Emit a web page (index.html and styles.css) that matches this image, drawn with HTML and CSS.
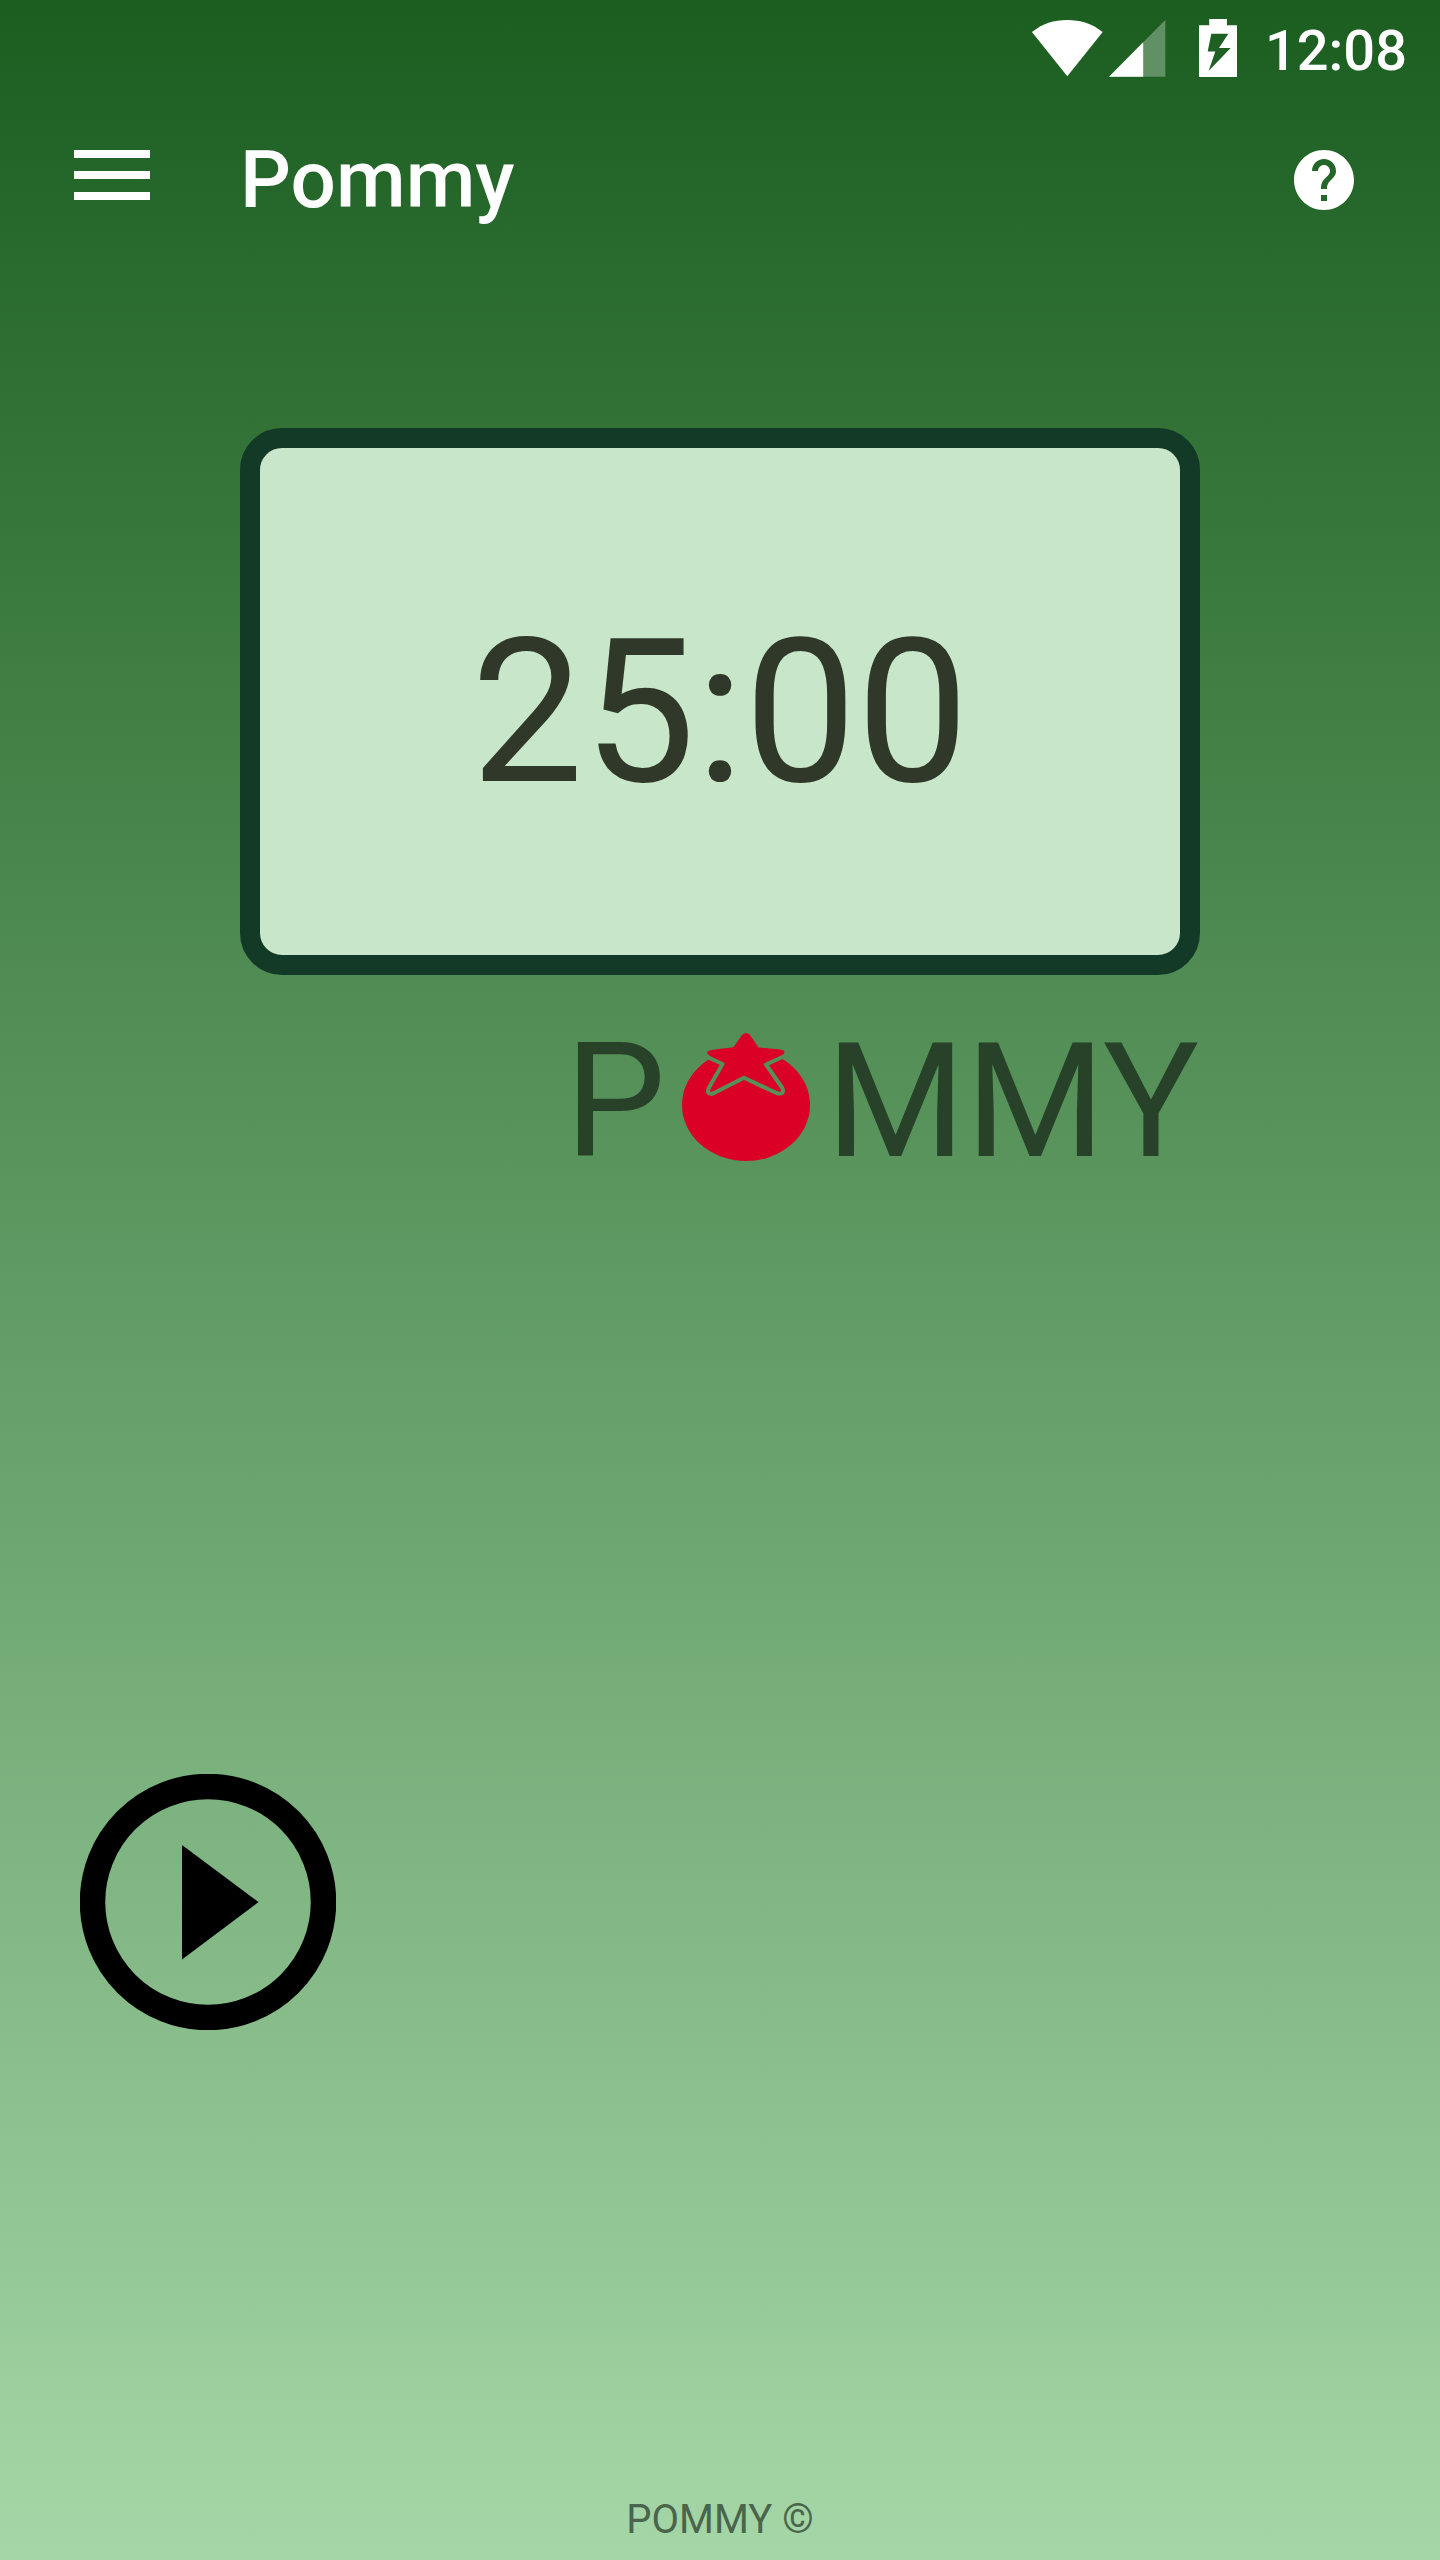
FILE: index.html
```html
<!DOCTYPE html>
<html lang="en">
<head>
<meta charset="utf-8">
<title>Pommy</title>
<link rel="stylesheet" href="styles.css">
</head>
<body>
<div class="screen">
  <div class="status-bar">
    <svg class="wifi" width="72" height="58" viewBox="0 0 72 58"><path d="M.9 13C11.500 4.500 23 .9 36.200.9S61 4.500 71.700 13L36.300 57.300Z" fill="#fff"/></svg>
    <svg class="signal" width="57" height="57" viewBox="0 0 57 57"><path d="M56.300 0v56.800H0Z" fill="#fff" fill-opacity=".3"/><path d="M34.200 22.300v34.500H0Z" fill="#fff"/></svg>
    <svg class="battery" width="38" height="58" viewBox="0 0 38 58"><path fill="#fff" fill-rule="evenodd" d="M10.200 0h17.800v6.200h10v51.800H0V6.200h10.200ZM12.300 14.700 8.700 32.500h7.600L9.600 52 31.700 29H20L29.300 14.700Z"/></svg>
    <span class="clock">12:08</span>
  </div>
  <header class="app-bar">
    <button class="menu" aria-label="Menu"><span></span><span></span><span></span></button>
    <h1>Pommy</h1>
    <svg class="help" width="72" height="72" viewBox="0 0 24 24"><path fill="#fff" d="M12 2C6.480 2 2 6.480 2 12s4.480 10 10 10 10-4.480 10-10S17.520 2 12 2zm1 17h-2v-2h2v2zm2.070-7.750-.9.920C13.450 12.900 13 13.500 13 15h-2v-.5c0-1.100.45-2.100 1.170-2.830l1.240-1.260c.37-.36.590-.86.590-1.410 0-1.100-.9-2-2-2s-2 .9-2 2H8c0-2.210 1.790-4 4-4s4 1.790 4 4c0 .88-.36 1.680-.93 2.250z"/></svg>
  </header>
  <main>
    <div class="timer">25:00</div>
    <div class="brand">
      <span>P</span>
      <svg width="128" height="128" viewBox="0 0 128 128">
        <mask id="leaf-gap" maskUnits="userSpaceOnUse" x="0" y="0" width="128" height="128">
          <rect width="128" height="128" fill="#fff"/>
          <path d="M22 22.500 40.500 31 26.800 55Q24 62 31 60.500L62 44.800 95 60.300Q103 62 100.300 55L84 31.500 106 21.500" fill="none" stroke="#000" stroke-width="4" stroke-linejoin="round"/>
        </mask>
        <g fill="#da0026" mask="url(#leaf-gap)">
          <ellipse cx="64" cy="72" rx="64" ry="56"/>
          <path d="M25.500 18.500Q27 17 37 16L51.500 14.200 60 2Q64 -2 68 2L76.500 14.500 93 16Q101 16.500 102.500 18.500Q103 20.500 99 23L84 31 70 40H56L40 31 28 23Q24.500 20.500 25.500 18.500Z"/>
        </g>
      </svg>
      <span>MMY</span>
    </div>
    <button class="play" aria-label="Start"><svg width="256" height="256" viewBox="0 0 256 256"><circle cx="128" cy="128" r="115.500" fill="none" stroke="#000" stroke-width="25.500"/><path d="M102 71v114.500l76.500-57.500Z"/></svg></button>
  </main>
  <footer>POMMY ©</footer>
</div>
</body>
</html>
```
FILE: styles.css
```css
* { box-sizing: border-box; }
body { margin: 0; font-family: Roboto, sans-serif; }
button { border: 0; padding: 0; background: none; }
svg { display: block; flex: none; }
.screen {
  width: 1440px;
  height: 2560px;
  display: flex;
  flex-direction: column;
  background: linear-gradient(#1b5e20, #a5d6a7);
}
.status-bar {
  height: 96px;
  display: flex;
  justify-content: flex-end;
  align-items: flex-start;
  padding: 19px 33px 0 0;
  color: #fff;
}
.signal { margin: 1px 0 0 6px; }
.battery { margin-left: 33px; }
.clock {
  margin-left: 28px;
  font-size: 56px;
  font-weight: 500;
  line-height: 64px;
}
.app-bar {
  height: 168px;
  display: flex;
  align-items: center;
  padding: 0 80px 0 74px;
  color: #fff;
}
.menu {
  width: 76px;
  height: 50px;
  margin: 0 90px 10px 0;
  display: flex;
  flex-direction: column;
  justify-content: space-between;
}
.menu span { width: 100%; height: 8px; background: #fff; }
.app-bar h1 { flex: 1; margin: 0; font-size: 80px; font-weight: 500; line-height: 94px; }
main { flex: 1; display: flex; flex-direction: column; padding: 164px 240px 0; }
.timer {
  height: 547px;
  padding-top: 21px;
  display: flex;
  align-items: center;
  justify-content: center;
  border: 20px solid #123a26;
  border-radius: 42px;
  background: #c8e6c9;
  color: #303929;
  font-size: 200px;
}
.brand {
  margin-top: 33px;
  height: 188px;
  padding-right: 1px;
  display: flex;
  justify-content: flex-end;
  gap: 16px;
  color: #28422a;
  font-size: 160px;
  line-height: 188px;
}
.brand svg { margin-top: 25px; }
.play { align-self: flex-start; margin: 578px 0 0 -160px; }
footer {
  height: 80px;
  color: #4a654b;
  font-size: 40px;
  line-height: 80px;
  text-align: center;
}
```
